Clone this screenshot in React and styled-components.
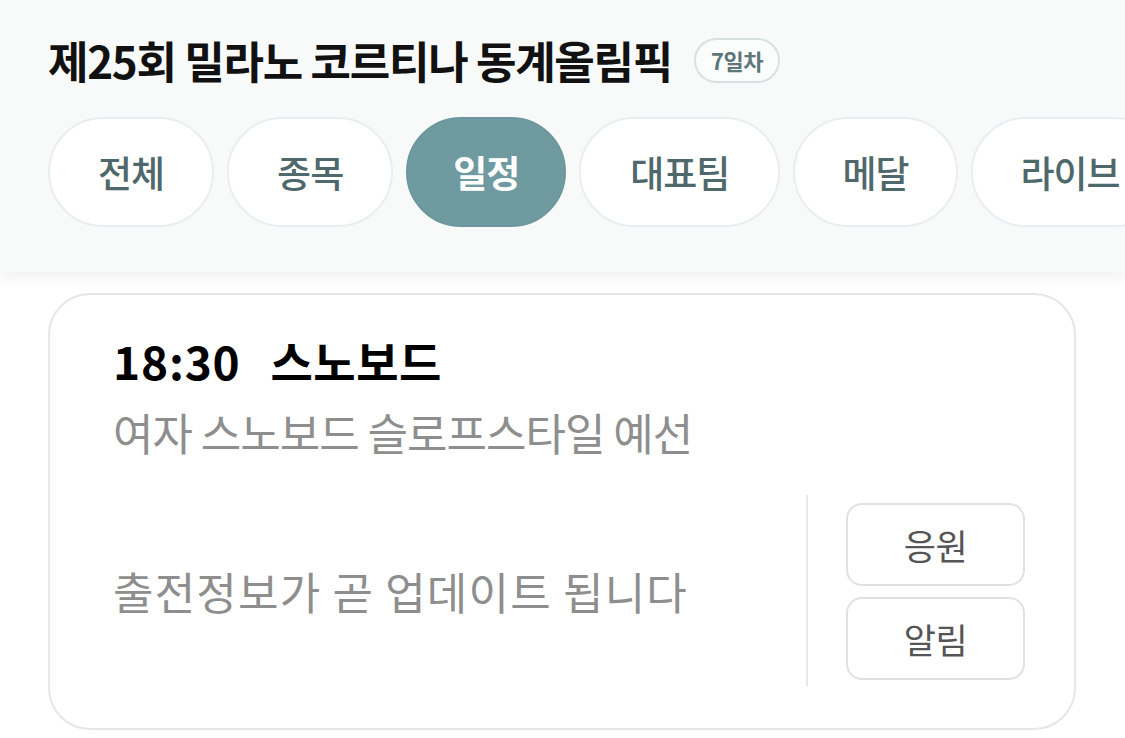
import React from "react";
import styled, { createGlobalStyle } from "styled-components";

const Global = createGlobalStyle`
  html, body { margin: 0; padding: 0; background: #ffffff; }
  body { font-family: "Noto Sans CJK KR", "Noto Sans", sans-serif; overflow: hidden; }
  * { box-sizing: border-box; }
`;

const Page = styled.div`
  width: 1125px;
  height: 738px;
  overflow: hidden;
  background: #ffffff;
`;

const Header = styled.header`
  background: #f8fafa;
  padding: 33px 0 45px 48px;
  box-shadow: 0 6px 14px rgba(0, 0, 0, 0.06);
  position: relative;
  z-index: 1;
`;

const TitleRow = styled.div`
  display: flex;
  align-items: center;
  gap: 22px;
`;

const Title = styled.h1`
  margin: 0;
  font-size: 44px;
  font-weight: 700;
  color: #111;
  letter-spacing: -1.3px;
  line-height: 54px;
`;

const Badge = styled.span`
  display: inline-flex;
  align-items: center;
  justify-content: center;
  height: 45px;
  padding: 0 15px;
  border: 2px solid #d9e0e0;
  border-radius: 23px;
  background: #fbfcfc;
  color: #5c7679;
  font-size: 22px;
  font-weight: 700;
  letter-spacing: -0.5px;
`;

const Tabs = styled.nav`
  display: flex;
  gap: 13px;
  margin-top: 30px;
  white-space: nowrap;
`;

const Tab = styled.button`
  flex: none;
  height: 110px;
  padding: 0 ${(p) => p.$pad}px;
  border-radius: 55px;
  border: 2px solid ${(p) => (p.$active ? "#6c979c" : "#e9eeee")};
  background: ${(p) => (p.$active ? "#6f9aa0" : "#ffffff")};
  color: ${(p) => (p.$active ? "#ffffff" : "#4f686b")};
  font-family: inherit;
  font-size: 37px;
  font-weight: ${(p) => (p.$active ? 700 : 500)};
  letter-spacing: -1px;
`;

const Card = styled.section`
  margin: 21px 49px 0 48px;
  height: 437px;
  border: 2px solid #e6e6e6;
  border-radius: 42px;
  padding: 37px 49px 0 63px;
  display: flex;
  flex-direction: column;
`;

const TimeRow = styled.div`
  display: flex;
  align-items: baseline;
  gap: 30px;
  font-size: 46px;
  font-weight: 700;
  color: #000;
  line-height: 56px;
`;

const Time = styled.span`
  letter-spacing: 0.8px;
`;

const Sport = styled.span`
  letter-spacing: 0.5px;
`;

const Sub = styled.div`
  margin-top: 14px;
  font-size: 44px;
  color: #8e8e8e;
  line-height: 60px;
  letter-spacing: -1px;
`;

const Bottom = styled.div`
  display: flex;
  align-items: stretch;
  margin-top: 33px;
  height: 191px;
`;

const Notice = styled.div`
  flex: 1;
  display: flex;
  align-items: center;
  font-size: 44px;
  color: #8e8e8e;
  letter-spacing: 1.2px;
  border-right: 2px solid #e8e8e8;
`;

const Actions = styled.div`
  display: flex;
  flex-direction: column;
  gap: 11px;
  padding: 8px 0 6px 38px;
`;

const ActionButton = styled.button`
  width: 179px;
  height: 83px;
  border: 2px solid #e1e1e1;
  border-radius: 16px;
  background: #fff;
  color: #555;
  font-family: inherit;
  font-size: 35px;
  font-weight: 400;
  letter-spacing: -0.5px;
`;

const tabs = [
  { label: "전체", pad: 48 },
  { label: "종목", pad: 48 },
  { label: "일정", pad: 45, active: true },
  { label: "대표팀", pad: 49 },
  { label: "메달", pad: 47 },
  { label: "라이브", pad: 48 },
];

export default function App() {
  return (
    <Page>
      <Global />
      <Header>
        <TitleRow>
          <Title>제25회 밀라노 코르티나 동계올림픽</Title>
          <Badge>7일차</Badge>
        </TitleRow>
        <Tabs>
          {tabs.map((t) => (
            <Tab key={t.label} $active={t.active} $pad={t.pad}>
              {t.label}
            </Tab>
          ))}
        </Tabs>
      </Header>
      <Card>
        <TimeRow>
          <Time>18:30</Time>
          <Sport>스노보드</Sport>
        </TimeRow>
        <Sub>여자 스노보드 슬로프스타일 예선</Sub>
        <Bottom>
          <Notice>출전정보가 곧 업데이트 됩니다</Notice>
          <Actions>
            <ActionButton>응원</ActionButton>
            <ActionButton>알림</ActionButton>
          </Actions>
        </Bottom>
      </Card>
    </Page>
  );
}
